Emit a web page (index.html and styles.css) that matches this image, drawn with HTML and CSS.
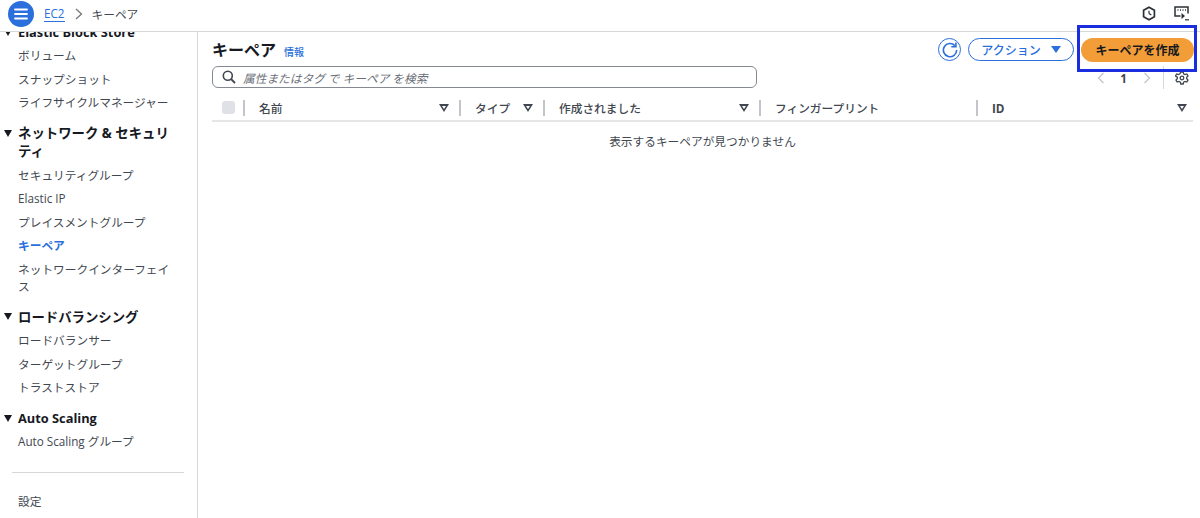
FILE: index.html
```html
<!DOCTYPE html>
<html lang="ja">
<head>
  <meta charset="utf-8">
  <title>キーペア | EC2</title>
  <link rel="stylesheet" href="styles.css">
</head>
<body>
  <div class="top-bar">
    <div class="menu-btn">
      <svg width="14" height="12" viewBox="0 0 14 12"><path d="M1 1.5h12M1 6h12M1 10.500h12" stroke="#fff" stroke-width="1.800" stroke-linecap="round" fill="none"/></svg>
    </div>
    <a class="crumb-link">EC2</a>
    <svg class="crumb-sep" width="8" height="12" viewBox="0 0 8 12"><path d="M1 1l5.500 5L1 11" stroke="#777" stroke-width="1.300" fill="none"/></svg>
    <span class="crumb-current">キーペア</span>
    <div class="top-icons">
      <svg width="14" height="15" viewBox="0 0 14 15"><path d="M7 1.200l5.400 3.100v6.400L7 13.800l-5.400-3.100V4.300z" stroke="#2b2f36" stroke-width="1.700" fill="none"/><path d="M7 7.500V4.800M7 7.500l2.300 1.600" stroke="#2b2f36" stroke-width="1.200" fill="none"/></svg>
      <svg width="15" height="15" viewBox="0 0 15 15"><path d="M6.500 10H1V1h13v6.500" stroke="#2b2f36" stroke-width="1.500" fill="none"/><path d="M3.500 4h1M6 4h1M8.500 4h1M11 4h1" stroke="#2b2f36" stroke-width="1.300"/><path d="M7.500 7l3.500 3-3.500 3z" fill="#2b2f36"/><path d="M11 13.800h4" stroke="#2b2f36" stroke-width="1.200"/></svg>
    </div>
  </div>

  <div class="layout">
    <nav class="side-nav">
      <div class="nav-scroll">
        <div class="nav-heading latin first"><span class="caret"></span>Elastic Block Store</div>
        <a class="nav-item">ボリューム</a>
        <a class="nav-item">スナップショット</a>
        <a class="nav-item">ライフサイクルマネージャー</a>

        <div class="nav-heading"><span class="caret"></span>ネットワーク &amp; セキュリティ</div>
        <a class="nav-item">セキュリティグループ</a>
        <a class="nav-item">Elastic IP</a>
        <a class="nav-item">プレイスメントグループ</a>
        <a class="nav-item active">キーペア</a>
        <a class="nav-item">ネットワークインターフェイス</a>

        <div class="nav-heading"><span class="caret"></span>ロードバランシング</div>
        <a class="nav-item">ロードバランサー</a>
        <a class="nav-item">ターゲットグループ</a>
        <a class="nav-item">トラストストア</a>

        <div class="nav-heading latin"><span class="caret"></span>Auto Scaling</div>
        <a class="nav-item">Auto Scaling グループ</a>

        <hr class="nav-rule">
        <a class="nav-item">設定</a>
      </div>
    </nav>

    <main class="content">
      <div class="page-head">
        <div class="head-left">
          <div class="title-row">
            <h1>キーペア</h1>
            <a class="info-link">情報</a>
          </div>
          <div class="search-box">
            <svg width="14" height="14" viewBox="0 0 14 14"><circle cx="5.800" cy="5.800" r="4.500" stroke="#414750" stroke-width="1.600" fill="none"/><path d="M9 9l4 4" stroke="#414750" stroke-width="1.800"/></svg>
            <span>属性またはタグ で キーペア を検索</span>
          </div>
        </div>
        <div class="head-right">
          <div class="actions">
            <div class="refresh-btn">
              <svg width="16" height="16" viewBox="0 0 16 16"><path d="M12.800 3.600A6.600 6.600 0 1 0 14.600 8" stroke="#2a6fdb" stroke-width="1.600" fill="none"/><path d="M9.300 4.800h4.600V.6" stroke="#2a6fdb" stroke-width="1.600" fill="none"/></svg>
            </div>
            <div class="action-btn">アクション<span class="down-tri"></span></div>
            <div class="primary-btn">キーペアを作成</div>
          </div>
          <div class="pager">
            <svg width="8" height="12" viewBox="0 0 8 12"><path d="M6.500 1L1.500 6l5 5" stroke="#c4c8ce" stroke-width="1.400" fill="none"/></svg>
            <span class="page-num">1</span>
            <svg width="8" height="12" viewBox="0 0 8 12"><path d="M1.500 1l5 5-5 5" stroke="#c4c8ce" stroke-width="1.400" fill="none"/></svg>
            <span class="pager-rule"></span>
            <svg width="14" height="14" viewBox="0 0 14 14"><path d="M5.800 1h2.400l.4 1.800 1.500.8 1.700-.6 1.200 2-1.300 1.200v1.600l1.300 1.200-1.200 2-1.700-.6-1.500.8L8.200 13H5.800l-.4-1.800-1.500-.8-1.700.6-1.200-2 1.300-1.200V6.200L.5 5l1.200-2 1.700.6 1.500-.8z" stroke="#414750" stroke-width="1.300" fill="none"/><circle cx="7" cy="7" r="1.800" stroke="#414750" stroke-width="1.300" fill="none"/></svg>
          </div>
        </div>
      </div>

      <div class="table-head">
        <div class="th th-check"><span class="checkbox"></span></div>
        <div class="th">名前<span class="sort-icon"></span></div>
        <div class="th">タイプ<span class="sort-icon"></span></div>
        <div class="th">作成されました<span class="sort-icon"></span></div>
        <div class="th">フィンガープリント</div>
        <div class="th th-last">ID<span class="sort-icon"></span></div>
      </div>
      <div class="empty-row">表示するキーペアが見つかりません</div>
    </main>
  </div>

  <!-- 注釈の青い枠 -->
  <div class="highlight"></div>
</body>
</html>
```

FILE: styles.css
```css
* {
  box-sizing: border-box;
  margin: 0;
  padding: 0;
}

html, body {
  width: 100%;
  height: 100%;
  overflow: hidden;
  background-color: #fff;
  color: #16191f;
  font-family: "Open Sans", "Noto Sans CJK JP", sans-serif;
  font-size: 11.700px;
}

body {
  position: relative;
}

/* Top bar */
.top-bar {
  display: flex;
  align-items: center;
  height: 32px;
  padding: 0 11px 4px 8px;
  border-bottom: 1px solid #d5d7da;
}

.menu-btn {
  display: flex;
  align-items: center;
  justify-content: center;
  width: 26px;
  height: 26px;
  margin-right: 10px;
  border-radius: 50%;
  background-color: #2a6fdb;
}

.crumb-link {
  color: #2a6fdb;
  border-bottom: 1px solid #2a6fdb;
  line-height: 15px;
}

.crumb-sep {
  margin: 0 9px 0 10px;
}

.crumb-current {
  color: #414750;
}

.top-icons {
  display: flex;
  align-items: center;
  gap: 18px;
  margin-left: auto;
}

/* Layout */
.layout {
  display: flex;
  height: 486px;
}

/* Side nav */
.side-nav {
  width: 198px;
  flex-shrink: 0;
  overflow: hidden;
  border-right: 1px solid #d5d7da;
}

.nav-scroll {
  margin-top: -9px;
  padding: 0 19px 0 18px;
}

.nav-heading {
  position: relative;
  margin: 9.500px 0 3px;
  font-size: 13.400px;
  font-weight: 700;
  line-height: 18px;
  color: #16191f;
}

.nav-heading.latin {
  font-size: 12.800px;
}

.nav-heading.first {
  margin-top: 0;
}

.caret {
  position: absolute;
  left: -14px;
  top: 5.500px;
  width: 0;
  height: 0;
  border-left: 4.500px solid transparent;
  border-right: 4.500px solid transparent;
  border-top: 7px solid #16191f;
}

.nav-item {
  display: block;
  padding: 3.300px 0;
  line-height: 17px;
  color: #414750;
}

.nav-item.active {
  color: #2a6fdb;
  font-weight: 700;
}

.nav-rule {
  width: 172px;
  margin: 18px 0 17px -6px;
  border: none;
  border-top: 1px solid #d5d7da;
}

/* Content */
.content {
  flex: 1;
  min-width: 0;
  padding: 6px 6px 0 14px;
}

.page-head {
  display: flex;
  justify-content: space-between;
}

.head-left {
  width: 545px;
}

.title-row {
  display: flex;
  align-items: center;
  gap: 8px;
  height: 24px;
  margin-bottom: 4px;
}

h1 {
  font-size: 16px;
  font-weight: 700;
  line-height: 22px;
}

.info-link {
  color: #2a6fdb;
  font-size: 10px;
  font-weight: 500;
  padding-top: 3px;
}

.search-box {
  display: flex;
  align-items: center;
  gap: 7px;
  height: 22px;
  padding-left: 9px;
  border: 1.500px solid #858a92;
  border-radius: 6px;
  font-style: italic;
  color: #6b7078;
}

.head-right {
  width: 256px;
}

.actions {
  display: flex;
  align-items: center;
  justify-content: flex-end;
  height: 23px;
}

.refresh-btn {
  display: flex;
  align-items: center;
  justify-content: center;
  width: 23px;
  height: 23px;
  margin-right: 7px;
  border: 1.500px solid #2a6fdb;
  border-radius: 50%;
}

.action-btn {
  display: flex;
  align-items: center;
  justify-content: center;
  gap: 10px;
  width: 106px;
  height: 23px;
  margin-right: 7px;
  border: 1.500px solid #2a6fdb;
  border-radius: 12px;
  color: #2a6fdb;
  font-size: 12px;
  font-weight: 500;
}

.down-tri {
  width: 0;
  height: 0;
  border-left: 5px solid transparent;
  border-right: 5px solid transparent;
  border-top: 7px solid #2a6fdb;
}

.primary-btn {
  display: flex;
  align-items: center;
  justify-content: center;
  width: 113px;
  height: 24px;
  border-radius: 12px;
  background-color: #f29d38;
  color: #16191f;
  font-size: 12px;
  font-weight: 700;
}

.pager {
  display: flex;
  align-items: center;
  justify-content: flex-end;
  height: 23px;
  margin-top: 5px;
  padding-right: 5px;
  color: #414750;
}

.page-num {
  margin: 0 16px 0 15px;
  font-weight: 700;
}

.pager-rule {
  width: 1px;
  height: 23px;
  margin: 0 11px 0 12px;
  background-color: #d5d7da;
}

/* Table */
.table-head {
  display: grid;
  grid-template-columns: 33px 216px 84px 216px 217px 215px;
  width: 981px;
  height: 27px;
  margin-top: 6px;
  border-bottom: 2px solid #e4e6e8;
  align-items: center;
}

.th {
  display: flex;
  align-items: center;
  justify-content: space-between;
  height: 16px;
  padding: 0 10px 0 14px;
  border-right: 2px solid #c2c6cb;
  color: #414750;
  font-weight: 500;
}

.th-last {
  padding-right: 6px;
  border-right: none;
  font-weight: 700;
}

.th-check {
  padding: 0 0 0 10px;
}

.checkbox {
  width: 13px;
  height: 13px;
  border-radius: 3px;
  background-color: #dfe1e6;
}

/* 白抜きのソート三角 */
.sort-icon {
  position: relative;
  width: 0;
  height: 0;
  border-left: 5px solid transparent;
  border-right: 5px solid transparent;
  border-top: 8px solid #414750;
}

.sort-icon::after {
  content: "";
  position: absolute;
  left: -2px;
  top: -6px;
  width: 0;
  height: 0;
  border-left: 2px solid transparent;
  border-right: 2px solid transparent;
  border-top: 3px solid #fff;
}

.empty-row {
  width: 981px;
  padding-top: 10px;
  text-align: center;
  color: #414750;
}

/* Annotation */
.highlight {
  position: absolute;
  left: 1077px;
  top: 25px;
  width: 120px;
  height: 47px;
  border: 3px solid #1a2ee0;
}
```
